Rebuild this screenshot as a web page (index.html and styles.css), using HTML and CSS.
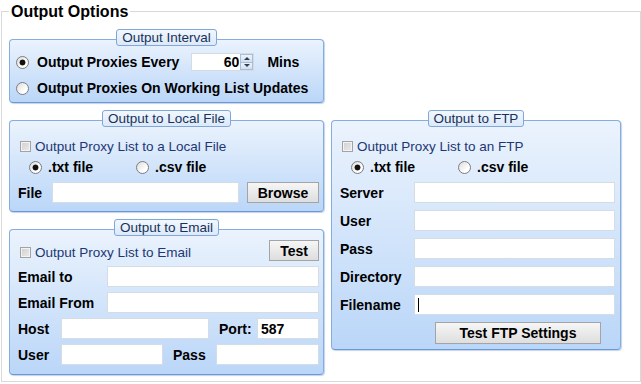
FILE: index.html
```html
<!DOCTYPE html>
<html lang="en">
<head>
    <meta charset="UTF-8">
    <title>Output Options</title>
    <link rel="stylesheet" href="styles.css">
</head>
<body>
    <div class="options">
        <div class="options-title">Output Options</div>

        <div class="layout">
            <!-- Interval -->
            <section class="group group-interval">
                <div class="group-title">Output Interval</div>
                <div class="group-body">
                    <div class="row row-tall">
                        <input type="radio" name="interval" checked>
                        <span class="text">Output Proxies Every</span>
                        <span class="spin">
                            <input class="spin-value" type="text" value="60">
                            <span class="spin-btns">
                                <span class="spin-btn up"></span>
                                <span class="spin-btn down"></span>
                            </span>
                        </span>
                        <span class="unit">Mins</span>
                    </div>
                    <div class="row row-tall">
                        <input type="radio" name="interval">
                        <span class="text">Output Proxies On Working List Updates</span>
                    </div>
                </div>
            </section>

            <!-- Local file -->
            <section class="group group-local">
                <div class="group-title">Output to Local File</div>
                <div class="group-body">
                    <label class="check-row">
                        <input type="checkbox">
                        <span class="check-text">Output Proxy List to a Local File</span>
                    </label>
                    <div class="radio-row">
                        <label class="option"><input type="radio" name="local-type" checked>.txt file</label>
                        <label class="option"><input type="radio" name="local-type">.csv file</label>
                    </div>
                    <div class="field-row file-row">
                        <span class="label label-file">File</span>
                        <input class="field grow" type="text">
                        <button class="btn btn-browse">Browse</button>
                    </div>
                </div>
            </section>

            <!-- Email -->
            <section class="group group-email">
                <div class="group-title">Output to Email</div>
                <div class="group-body">
                    <div class="email-head">
                        <label class="check-row">
                            <input type="checkbox">
                            <span class="check-text">Output Proxy List to Email</span>
                        </label>
                        <button class="btn btn-test">Test</button>
                    </div>
                    <div class="field-row">
                        <span class="label label-email">Email to</span>
                        <input class="field grow" type="text">
                    </div>
                    <div class="field-row">
                        <span class="label label-email">Email From</span>
                        <input class="field grow" type="text">
                    </div>
                    <div class="field-row">
                        <span class="label label-short">Host</span>
                        <input class="field field-host" type="text">
                        <span class="label label-port">Port:</span>
                        <input class="field grow" type="text" value="587">
                    </div>
                    <div class="field-row">
                        <span class="label label-short">User</span>
                        <input class="field field-user" type="text">
                        <span class="label label-pass">Pass</span>
                        <input class="field grow" type="text">
                    </div>
                </div>
            </section>

            <!-- FTP -->
            <section class="group group-ftp">
                <div class="group-title">Output to FTP</div>
                <div class="group-body">
                    <label class="check-row">
                        <input type="checkbox">
                        <span class="check-text">Output Proxy List to an FTP</span>
                    </label>
                    <div class="radio-row">
                        <label class="option"><input type="radio" name="ftp-type" checked>.txt file</label>
                        <label class="option"><input type="radio" name="ftp-type">.csv file</label>
                    </div>
                    <div class="ftp-fields">
                        <div class="field-row">
                            <span class="label label-ftp">Server</span>
                            <input class="field grow" type="text">
                        </div>
                        <div class="field-row">
                            <span class="label label-ftp">User</span>
                            <input class="field grow" type="text">
                        </div>
                        <div class="field-row">
                            <span class="label label-ftp">Pass</span>
                            <input class="field grow" type="text">
                        </div>
                        <div class="field-row">
                            <span class="label label-ftp">Directory</span>
                            <input class="field grow" type="text">
                        </div>
                        <div class="field-row">
                            <span class="label label-ftp">Filename</span>
                            <div class="field grow field-focus"><span class="caret"></span></div>
                        </div>
                    </div>
                    <button class="btn btn-ftp">Test FTP Settings</button>
                </div>
            </section>
        </div>
    </div>
</body>
</html>
```

FILE: styles.css
```css
body {
    margin: 0;
    background-color: #fff;
    font-family: "Liberation Sans", Arial, sans-serif;
    font-size: 14px;
    color: #000;
}

.options {
    margin: 11px 0 0 1px;
    width: 638px;
    height: 369px;
    border: 1px solid #d9d9d9;
}

.options-title {
    width: max-content;
    margin: -9px 0 0 7px;
    padding: 0 2px;
    height: 17px;
    line-height: 17px;
    font-size: 16px;
    font-weight: bold;
    background-color: #fff;
}

.layout {
    display: grid;
    grid-template-columns: 315px 290px;
    column-gap: 7px;
    row-gap: 7px;
    margin: 9px 0 0 7px;
    align-items: start;
}

.group-interval { grid-column: 1; grid-row: 1; }
.group-local    { grid-column: 1; grid-row: 2; }
.group-email    { grid-column: 1; grid-row: 3; }
.group-ftp      { grid-column: 2; grid-row: 2 / 4; }

/* group box with a tab title */
.group {
    display: flex;
    flex-direction: column;
}

.group-title {
    position: relative;
    z-index: 1;
    align-self: center;
    height: 15px;
    line-height: 15px;
    padding: 0 5px;
    margin-bottom: -7px;
    font-size: 13.5px;
    color: #18325a;
    background: linear-gradient(#f1f7fe, #dde9f8);
    border: 1px solid #7fa7da;
    border-radius: 3px;
}

.group-body {
    padding: 15px 4px 8px 8px;
    background: linear-gradient(#ebf3fd, #bad6f8);
    border: 1px solid #84ade0;
    border-bottom-color: #6b98d4;
    border-radius: 4px;
    box-shadow: 1px 1px 1px rgba(90, 130, 190, 0.35);
    font-weight: bold;
}

.group-interval .group-body {
    padding: 9px 4px 1px 6px;
}

.group-email .group-body {
    padding-top: 10px;
    padding-bottom: 9px;
}

.group-ftp .group-body {
    padding-right: 5px;
    padding-bottom: 5px;
}

.row {
    display: flex;
    align-items: center;
}

.row-tall {
    height: 26px;
}

.row input[type="radio"] {
    margin-right: 8px;
}

/* radio buttons and checkboxes */
input[type="radio"] {
    appearance: none;
    -webkit-appearance: none;
    flex: none;
    width: 13px;
    height: 13px;
    margin: 0;
    border: 1px solid #7c7c7c;
    border-radius: 50%;
    background: linear-gradient(135deg, #dcdcdc, #fff 70%);
}

input[type="radio"]:checked {
    background: radial-gradient(circle, #111 0 2.6px, rgba(0,0,0,0) 3.3px), linear-gradient(135deg, #dcdcdc, #fff 70%);
}

input[type="checkbox"] {
    appearance: none;
    -webkit-appearance: none;
    flex: none;
    width: 11px;
    height: 11px;
    margin: 0 4px 0 2px;
    border: 1px solid #a3a3a3;
    background: linear-gradient(135deg, #cfcfcf, #ececec);
    box-shadow: inset 0 0 0 1px #f3f3f3;
}

.check-row {
    display: flex;
    align-items: center;
    height: 20px;
}

.check-text {
    font-weight: normal;
    font-size: 13.5px;
    color: #1c3774;
}

.radio-row {
    display: flex;
    align-items: center;
    height: 20px;
    margin-top: 1px;
    padding-left: 11px;
}

.option {
    display: flex;
    align-items: center;
    width: 107px;
}

.option input[type="radio"] {
    margin-right: 6px;
}

/* spinner */
.spin {
    display: flex;
    margin-left: 12px;
    width: 63px;
    height: 18px;
    box-sizing: border-box;
    border: 1px solid #d3dbe5;
    background-color: #fff;
}

.spin-value {
    width: 47px;
    padding: 0 1px 0 0;
    margin: 0;
    border: 0;
    outline: none;
    text-align: right;
    font: bold 14px "Liberation Sans", Arial, sans-serif;
    background: transparent;
}

.spin-btns {
    display: flex;
    flex-direction: column;
    width: 14px;
}

.spin-btn {
    flex: 1;
    display: flex;
    align-items: center;
    justify-content: center;
    border: 1px solid #a9bdd6;
    background: linear-gradient(#eef3fa, #d3dfee);
}

.spin-btn.up {
    border-bottom-width: 0;
}

.spin-btn::after {
    content: "";
    border-left: 3px solid transparent;
    border-right: 3px solid transparent;
}

.spin-btn.up::after {
    border-bottom: 3px solid #2c3e5a;
}

.spin-btn.down::after {
    border-top: 3px solid #2c3e5a;
}

.unit {
    margin-left: 13px;
}

/* text fields */
.field-row {
    display: flex;
    align-items: center;
    height: 21px;
    margin-top: 5px;
}

.label {
    flex: none;
}

.label-file  { width: 34px; }
.label-email { width: 89px; }
.label-short { width: 43px; }
.label-port  { width: 38px; margin-left: 10px; }
.label-pass  { width: 43px; margin-left: 10px; }
.label-ftp   { width: 74px; }

.field {
    box-sizing: border-box;
    height: 21px;
    margin: 0;
    padding: 0 3px;
    border: 1px solid #d4dce6;
    background-color: #fff;
    font: bold 14px "Liberation Sans", Arial, sans-serif;
    color: #000;
    outline: none;
}

.grow {
    flex: 1;
    min-width: 0;
}

.field-host { width: 148px; }
.field-user { width: 102px; }

.field-focus {
    display: flex;
    align-items: center;
}

.caret {
    width: 1px;
    height: 14px;
    background-color: #000;
}

.ftp-fields .field-row + .field-row {
    margin-top: 7px;
}

/* buttons */
.btn {
    box-sizing: border-box;
    height: 21px;
    margin: 0;
    padding: 0;
    border: 1px solid #a4a4a4;
    background: linear-gradient(#f6f6f6, #dedede);
    font: bold 14px "Liberation Sans", Arial, sans-serif;
    color: #000;
}

.btn-browse {
    width: 72px;
    margin-left: 8px;
}

.email-head {
    display: flex;
    align-items: flex-end;
    justify-content: space-between;
    height: 21px;
}

.email-head .check-row {
    height: 18px;
}

.btn-test {
    width: 50px;
}

.btn-ftp {
    display: block;
    width: 166px;
    height: 22px;
    margin: 7px 0 0 95px;
}
```
